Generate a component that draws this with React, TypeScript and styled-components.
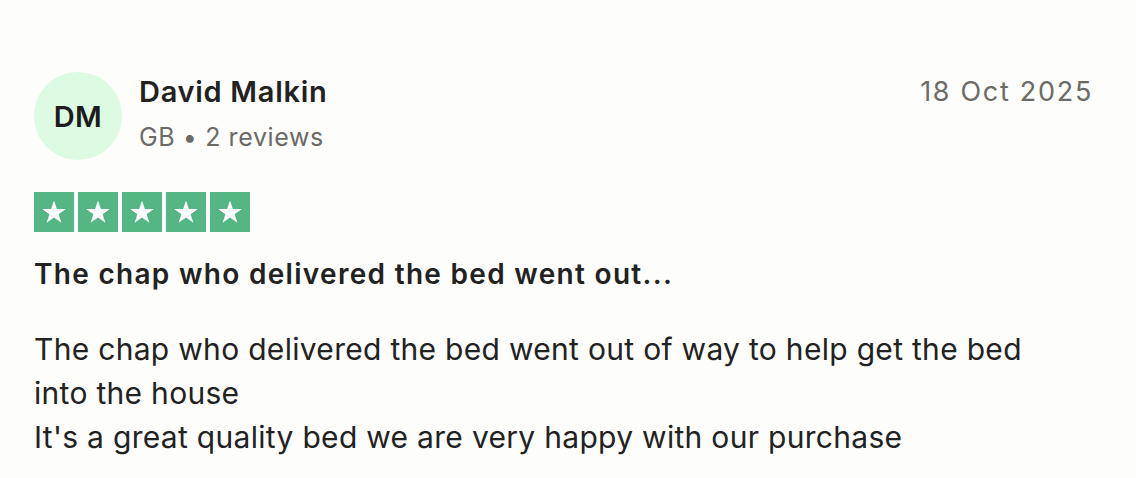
import React from 'react';
import styled, { createGlobalStyle } from 'styled-components';

const GlobalStyle = createGlobalStyle`
  html, body {
    margin: 0;
    padding: 0;
    background: #fdfdfc;
  }
  body {
    font-family: Inter, "Noto Sans", sans-serif;
    color: #222222;
  }
`;

const Card = styled.div`
  padding: 72px 43px 30px 34px;
`;

const Header = styled.div`
  display: flex;
  align-items: flex-start;
`;

const Avatar = styled.div`
  width: 88px;
  height: 88px;
  border-radius: 50%;
  background: #dcfbe2;
  display: flex;
  align-items: center;
  justify-content: center;
  font-size: 29px;
  font-weight: 600;
  letter-spacing: 0.5px;
  color: #1c1c1c;
  flex-shrink: 0;
`;

const Who = styled.div`
  margin-left: 17px;
  flex: 1;
`;

const Name = styled.div`
  font-size: 29px;
  font-weight: 600;
  line-height: 40px;
  letter-spacing: 0.7px;
`;

const Meta = styled.div`
  font-size: 25px;
  color: #6b6a66;
  line-height: 34px;
  margin-top: 8px;
  letter-spacing: 0.6px;
`;

const DateText = styled.div`
  font-size: 27px;
  color: #6b6a66;
  line-height: 40px;
  letter-spacing: 1.7px;
`;

const Stars = styled.div`
  display: flex;
  gap: 4px;
  margin-top: 32px;
`;

const StarBox = styled.div`
  width: 40px;
  height: 40px;
  background: #54b683;
  display: flex;
  align-items: center;
  justify-content: center;
`;

const Title = styled.h2`
  margin: 22px 0 0;
  font-size: 28px;
  font-weight: 600;
  line-height: 40px;
  letter-spacing: 1.3px;
`;

const Body = styled.p`
  margin: 33px 0 0;
  max-width: 1010px;
  font-size: 30px;
  line-height: 44px;
  font-weight: 400;
  letter-spacing: 0.3px;
`;

const Star = () => (
  <svg width="28" height="28" viewBox="0 0 24 24">
    <path
      d="M12 2.2l2.45 7.3h7.7l-6.23 4.5 2.38 7.3L12 16.8l-6.3 4.5 2.38-7.3L1.85 9.5h7.7z"
      fill="#fff"
    />
  </svg>
);

export default function App() {
  return (
    <>
      <GlobalStyle />
      <Card>
        <Header>
          <Avatar>DM</Avatar>
          <Who>
            <Name>David Malkin</Name>
            <Meta>GB • 2 reviews</Meta>
          </Who>
          <DateText>18 Oct 2025</DateText>
        </Header>
        <Stars>
          {[0, 1, 2, 3, 4].map(i => (
            <StarBox key={i}>
              <Star />
            </StarBox>
          ))}
        </Stars>
        <Title>The chap who delivered the bed went out...</Title>
        <Body>
          The chap who delivered the bed went out of way to help get the bed into the house
          <br />
          It's a great quality bed we are very happy with our purchase
        </Body>
      </Card>
    </>
  );
}
